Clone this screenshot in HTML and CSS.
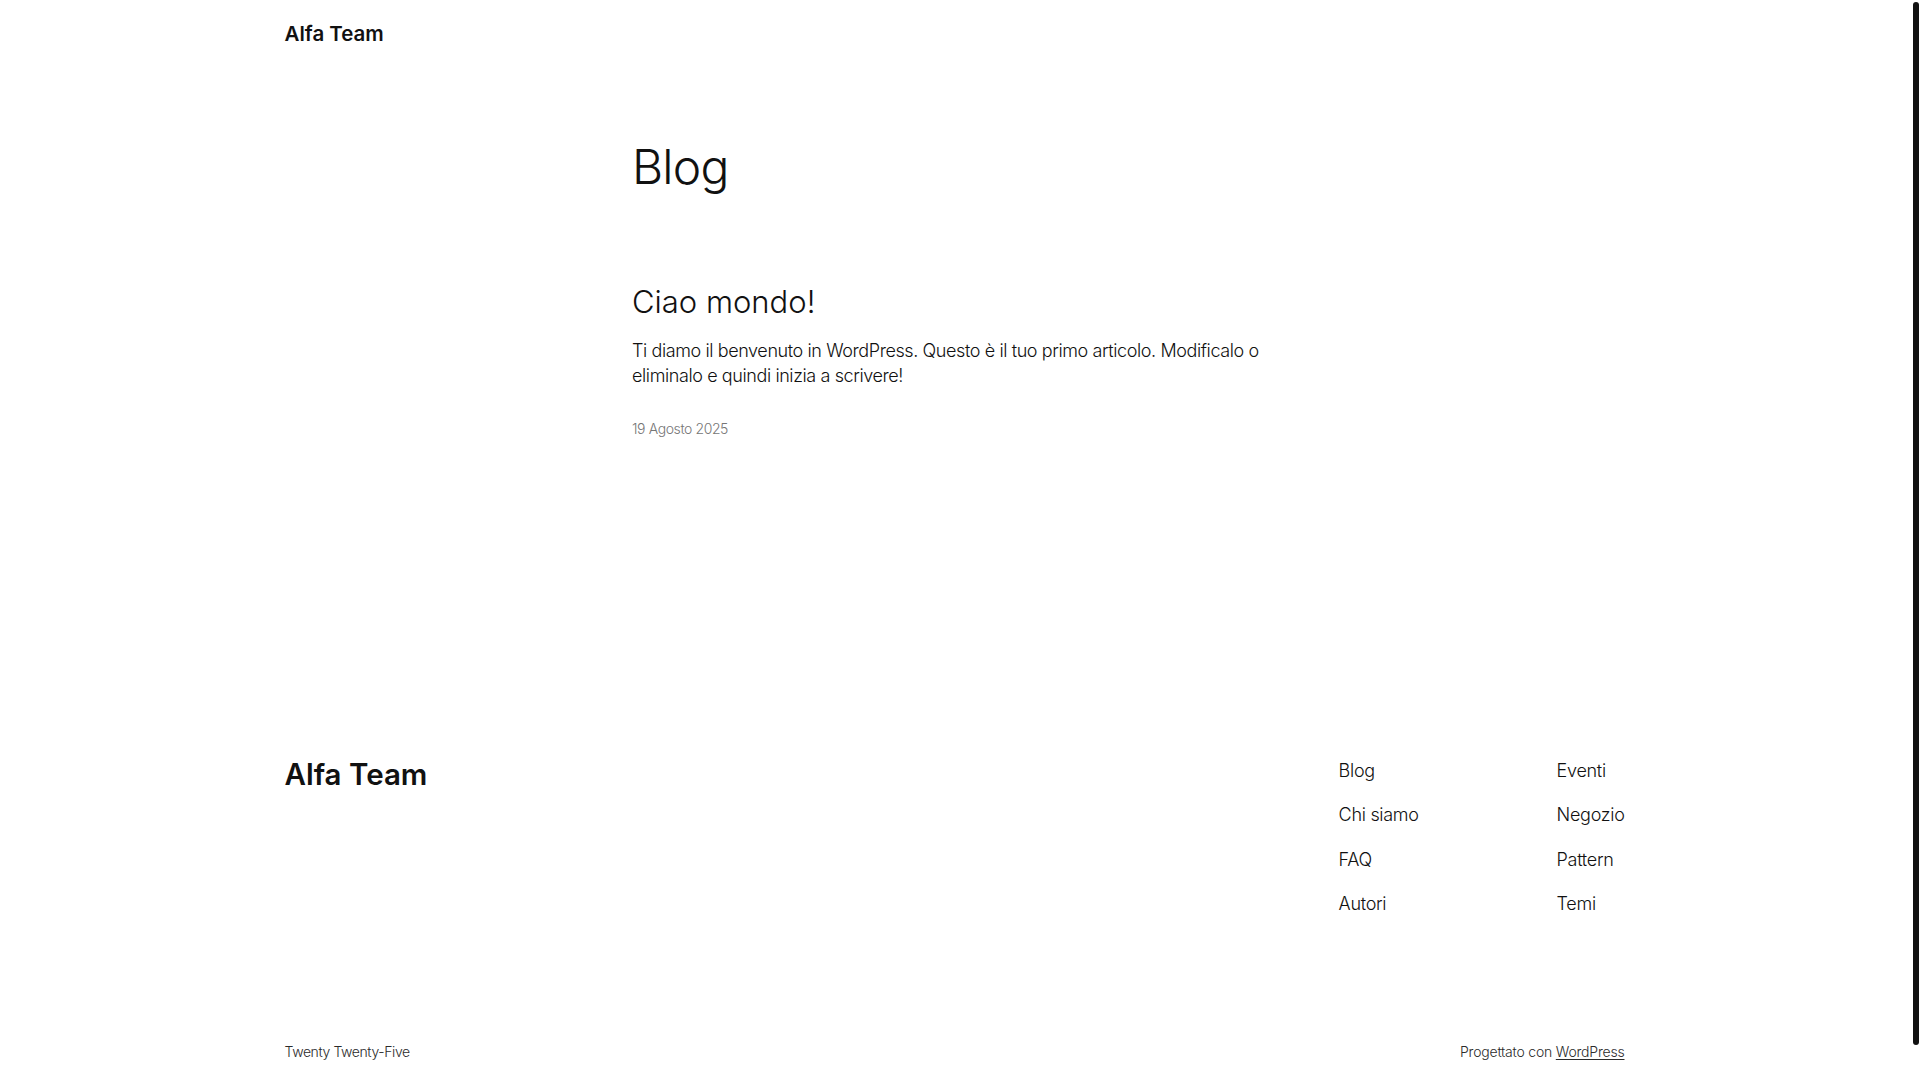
FILE: index.html
```html
<!DOCTYPE html>
<html lang="it">
<head>
<meta charset="utf-8">
<title>Blog – Alfa Team</title>
<link rel="stylesheet" href="styles.css">
</head>
<body>
<div class="page">
  <header class="site-header">
    <div class="wide">
      <a class="site-title" href="#">Alfa Team</a>
    </div>
  </header>

  <main class="site-main">
    <div class="content">
      <h1 class="page-title">Blog</h1>
      <article class="post">
        <h2 class="post-title"><a href="#">Ciao mondo!</a></h2>
        <p class="post-excerpt">Ti diamo il benvenuto in WordPress. Questo è il tuo primo articolo. Modificalo o eliminalo e quindi inizia a scrivere!</p>
        <time class="post-date">19 Agosto 2025</time>
      </article>
    </div>
  </main>

  <footer class="site-footer">
    <div class="wide footer-top">
      <a class="footer-title" href="#">Alfa Team</a>
      <div class="footer-navs">
        <ul class="footer-nav">
          <li><a href="#">Blog</a></li>
          <li><a href="#">Chi siamo</a></li>
          <li><a href="#">FAQ</a></li>
          <li><a href="#">Autori</a></li>
        </ul>
        <ul class="footer-nav">
          <li><a href="#">Eventi</a></li>
          <li><a href="#">Negozio</a></li>
          <li><a href="#">Pattern</a></li>
          <li><a href="#">Temi</a></li>
        </ul>
      </div>
    </div>
    <div class="wide footer-bottom">
      <span class="theme-name">Twenty Twenty-Five</span>
      <span class="credit">Progettato con <a href="#">WordPress</a></span>
    </div>
  </footer>
</div>
<div class="scroll-thumb" aria-hidden="true"></div>
</body>
</html>
```

FILE: styles.css
```css
html {
  overflow: hidden;
}

html, body {
  margin: 0;
  padding: 0;
  background: #ffffff;
}

body {
  font-family: "Inter", "Noto Sans", "DejaVu Sans", sans-serif;
  color: #111111;
  font-weight: 300;
  -webkit-font-smoothing: antialiased;
  margin-right: 11px;
}

a {
  color: inherit;
  text-decoration: none;
}

.page {
  display: flex;
  flex-direction: column;
}

.wide {
  max-width: 1340px;
  margin: 0 auto;
  width: 100%;
  box-sizing: border-box;
}

/* Header */
.site-header {
  padding: 20px 0;
}

.site-title {
  display: inline-block;
  font-size: 20.5px;
  line-height: 28px;
  font-weight: 600;
  letter-spacing: 0;
}

/* Main */
.content {
  max-width: 645px;
  margin: 0 auto;
}

.page-title {
  margin: 70px 0 0;
  font-size: 48px;
  line-height: 1.2;
  font-weight: 300;
  letter-spacing: -0.8px;
}

.post {
  margin-top: 88px;
}

.post-title {
  margin: 0;
  font-size: 31px;
  line-height: 36px;
  font-weight: 300;
  letter-spacing: 0;
}

.post-excerpt {
  margin: 18px 0 0;
  font-size: 18px;
  line-height: 25px;
  font-weight: 300;
  letter-spacing: -0.4px;
}

.post-date {
  display: block;
  margin-top: 31px;
  font-size: 14px;
  line-height: 20px;
  color: #767676;
  letter-spacing: -0.4px;
}

/* Footer */
.site-footer {
  margin-top: 318px;
}

.footer-top {
  display: flex;
  justify-content: space-between;
  align-items: flex-start;
}

.footer-title {
  margin-top: 0;
  font-size: 29.5px;
  line-height: 34px;
  font-weight: 600;
  letter-spacing: 0;
}

.footer-navs {
  display: grid;
  grid-template-columns: 218px auto;
}

.footer-nav {
  list-style: none;
  margin: 0;
  padding: 0;
  display: flex;
  flex-direction: column;
  gap: 17.5px;
}

.footer-nav li {
  font-size: 18px;
  line-height: 27px;
  font-weight: 300;
  letter-spacing: -0.3px;
}

.footer-bottom {
  display: flex;
  justify-content: space-between;
  align-items: center;
  margin-top: 125px;
  padding-bottom: 53px;
  font-size: 14px;
  line-height: 20px;
  color: #2b2b2b;
  letter-spacing: -0.4px;
}

.credit {
  letter-spacing: -0.2px;
}

.credit a {
  text-decoration: underline;
  text-underline-offset: 2px;
  text-decoration-thickness: 1px;
}

/* Overlay scrollbar thumb */
.scroll-thumb {
  position: fixed;
  top: 2px;
  right: 1px;
  width: 6px;
  height: 1043px;
  border-radius: 3px;
  background: #111111;
}
```
